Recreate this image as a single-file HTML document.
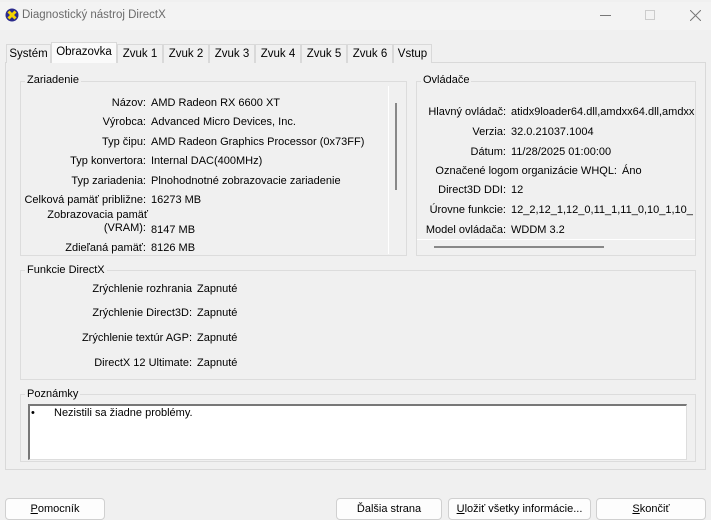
<!DOCTYPE html><html><head><meta charset="utf-8"><style>
*{margin:0;padding:0;box-sizing:border-box}
body{width:711px;height:518px;background:#f0f0f0;font-family:"Liberation Sans",sans-serif;font-size:11px;color:#000;position:relative;overflow:hidden}
.a{position:absolute;white-space:nowrap}
.r{position:absolute;white-space:nowrap;text-align:right}
.t{margin-top:2px}
.gb{position:absolute;border:1px solid #dcdcdc}
.lb{position:absolute;background:#f0f0f0;padding:0 2px;line-height:13px}
.tab{position:absolute;top:42px;height:19px;border:1px solid #d9d9d9;border-bottom:none;line-height:19px;text-align:center;font-size:11.5px;background:#f0f0f0}
.btn{position:absolute;top:496px;height:22px;border:1px solid #d0d0d0;border-radius:4px;background:#fdfdfd;text-align:center;line-height:21px;font-size:11px}
</style></head><body>
<div class="a" style="left:0;top:0;width:711px;height:28px;background:#f3f3f3"></div>
<svg class="a" style="left:5px;top:6px" width="14" height="14" viewBox="0 0 14 14"><circle cx="7" cy="7" r="6.5" fill="#2b2b8c"/><path d="M3.5 3.5L10.5 10.5M10.5 3.5L3.5 10.5" stroke="#f5d400" stroke-width="3"/></svg>
<div class="a" style="left:22px;top:7px;color:#6b6b6b;font-size:11.5px">Diagnostický nástroj DirectX</div>
<div class="a" style="left:600px;top:13px;width:11px;height:1px;background:#777"></div>
<div class="a" style="left:645px;top:8px;width:10px;height:10px;border:1px solid #ccc"></div>
<svg class="a" style="left:690px;top:8px" width="11" height="11"><path d="M0 0L11 11M11 0L0 11" stroke="#777" stroke-width="1"/></svg>

<div class="a" style="left:5px;top:60px;width:701px;height:408px;border:1px solid #d9d9d9;background:#f0f0f0"></div>
<div class="tab" style="left:6px;width:45px">Systém</div>
<div class="tab" style="left:51px;width:66px;top:40px;height:21px;background:#fafafa;line-height:19px">Obrazovka</div>
<div class="tab" style="left:117px;width:46px">Zvuk 1</div>
<div class="tab" style="left:163px;width:46px">Zvuk 2</div>
<div class="tab" style="left:209px;width:46px">Zvuk 3</div>
<div class="tab" style="left:255px;width:46px">Zvuk 4</div>
<div class="tab" style="left:301px;width:46px">Zvuk 5</div>
<div class="tab" style="left:347px;width:46px">Zvuk 6</div>
<div class="tab" style="left:393px;width:39px">Vstup</div>

<div class="gb" style="left:20px;top:79px;width:387px;height:175px"></div>
<div class="lb" style="left:25px;top:72px">Zariadenie</div>
<div class="a" style="left:388px;top:84px;width:1px;height:168px;background:#fff"></div>
<div class="a" style="left:395px;top:101px;width:2px;height:87px;background:#888"></div>
<div class="t">
<div class="r" style="right:565px;top:95px">Názov:</div><div class="a" style="left:151px;top:95px">AMD Radeon RX 6600 XT</div>
<div class="r" style="right:565px;top:114px">Výrobca:</div><div class="a" style="left:151px;top:114px">Advanced Micro Devices, Inc.</div>
<div class="r" style="right:565px;top:134px">Typ čipu:</div><div class="a" style="left:151px;top:134px">AMD Radeon Graphics Processor (0x73FF)</div>
<div class="r" style="right:565px;top:153px">Typ konvertora:</div><div class="a" style="left:151px;top:153px">Internal DAC(400MHz)</div>
<div class="r" style="right:565px;top:173px">Typ zariadenia:</div><div class="a" style="left:151px;top:173px">Plnohodnotné zobrazovacie zariadenie</div>
<div class="r" style="right:565px;top:192px">Celková pamäť približne:</div><div class="a" style="left:151px;top:192px">16273 MB</div>
<div class="r" style="right:563px;top:207px">Zobrazovacia pamäť</div>
<div class="r" style="right:565px;top:220px">(VRAM):</div><div class="a" style="left:151px;top:222px">8147 MB</div>
<div class="r" style="right:565px;top:240px">Zdieľaná pamäť:</div><div class="a" style="left:151px;top:240px">8126 MB</div>
</div>

<div class="gb" style="left:416px;top:79px;width:280px;height:175px"></div>
<div class="lb" style="left:421px;top:72px">Ovládače</div>
<div class="t">
<div class="r" style="right:205px;top:104px">Hlavný ovládač:</div><div class="a" style="left:511px;top:104px;width:184px;overflow:hidden">atidx9loader64.dll,amdxx64.dll,amdxx</div>
<div class="r" style="right:205px;top:124px">Verzia:</div><div class="a" style="left:511px;top:124px">32.0.21037.1004</div>
<div class="r" style="right:205px;top:144px">Dátum:</div><div class="a" style="left:511px;top:144px">11/28/2025 01:00:00</div>
<div class="r" style="right:94px;top:163px">Označené logom organizácie WHQL:</div><div class="a" style="left:622px;top:163px">Áno</div>
<div class="r" style="right:205px;top:182px">Direct3D DDI:</div><div class="a" style="left:511px;top:182px">12</div>
<div class="r" style="right:205px;top:202px">Úrovne funkcie:</div><div class="a" style="left:511px;top:202px;width:184px;overflow:hidden">12_2,12_1,12_0,11_1,11_0,10_1,10_</div>
<div class="r" style="right:205px;top:222px">Model ovládača:</div><div class="a" style="left:511px;top:222px">WDDM 3.2</div>
</div>
<div class="a" style="left:417px;top:237px;width:278px;height:1px;background:#fff"></div>
<div class="a" style="left:434px;top:244px;width:170px;height:2px;background:#888"></div>

<div class="gb" style="left:20px;top:268px;width:676px;height:110px"></div>
<div class="lb" style="left:25px;top:262px">Funkcie DirectX</div>
<div class="t">
<div class="r" style="right:519px;top:281px">Zrýchlenie rozhrania</div><div class="a" style="left:197px;top:281px">Zapnuté</div>
<div class="r" style="right:519px;top:305px">Zrýchlenie Direct3D:</div><div class="a" style="left:197px;top:305px">Zapnuté</div>
<div class="r" style="right:519px;top:330px">Zrýchlenie textúr AGP:</div><div class="a" style="left:197px;top:330px">Zapnuté</div>
<div class="r" style="right:519px;top:355px">DirectX 12 Ultimate:</div><div class="a" style="left:197px;top:355px">Zapnuté</div>
</div>

<div class="gb" style="left:20px;top:392px;width:676px;height:68px"></div>
<div class="lb" style="left:25px;top:386px">Poznámky</div>
<div class="a" style="left:28px;top:402px;width:659px;height:56px;background:#fff;border-top:2px solid #777;border-left:2px solid #777;border-right:1px solid #ddd;border-bottom:1px solid #ddd"></div>
<div class="a" style="left:31px;top:405px">•</div><div class="a" style="left:54px;top:405px">Nezistili sa žiadne problémy.</div>

<div class="btn" style="left:5px;width:100px"><u>P</u>omocník</div>
<div class="btn" style="left:336px;width:106px">Ďalšia strana</div>
<div class="btn" style="left:448px;width:143px"><u>U</u>ložiť všetky informácie...</div>
<div class="btn" style="left:596px;width:110px"><u>S</u>končiť</div>
</body></html>
